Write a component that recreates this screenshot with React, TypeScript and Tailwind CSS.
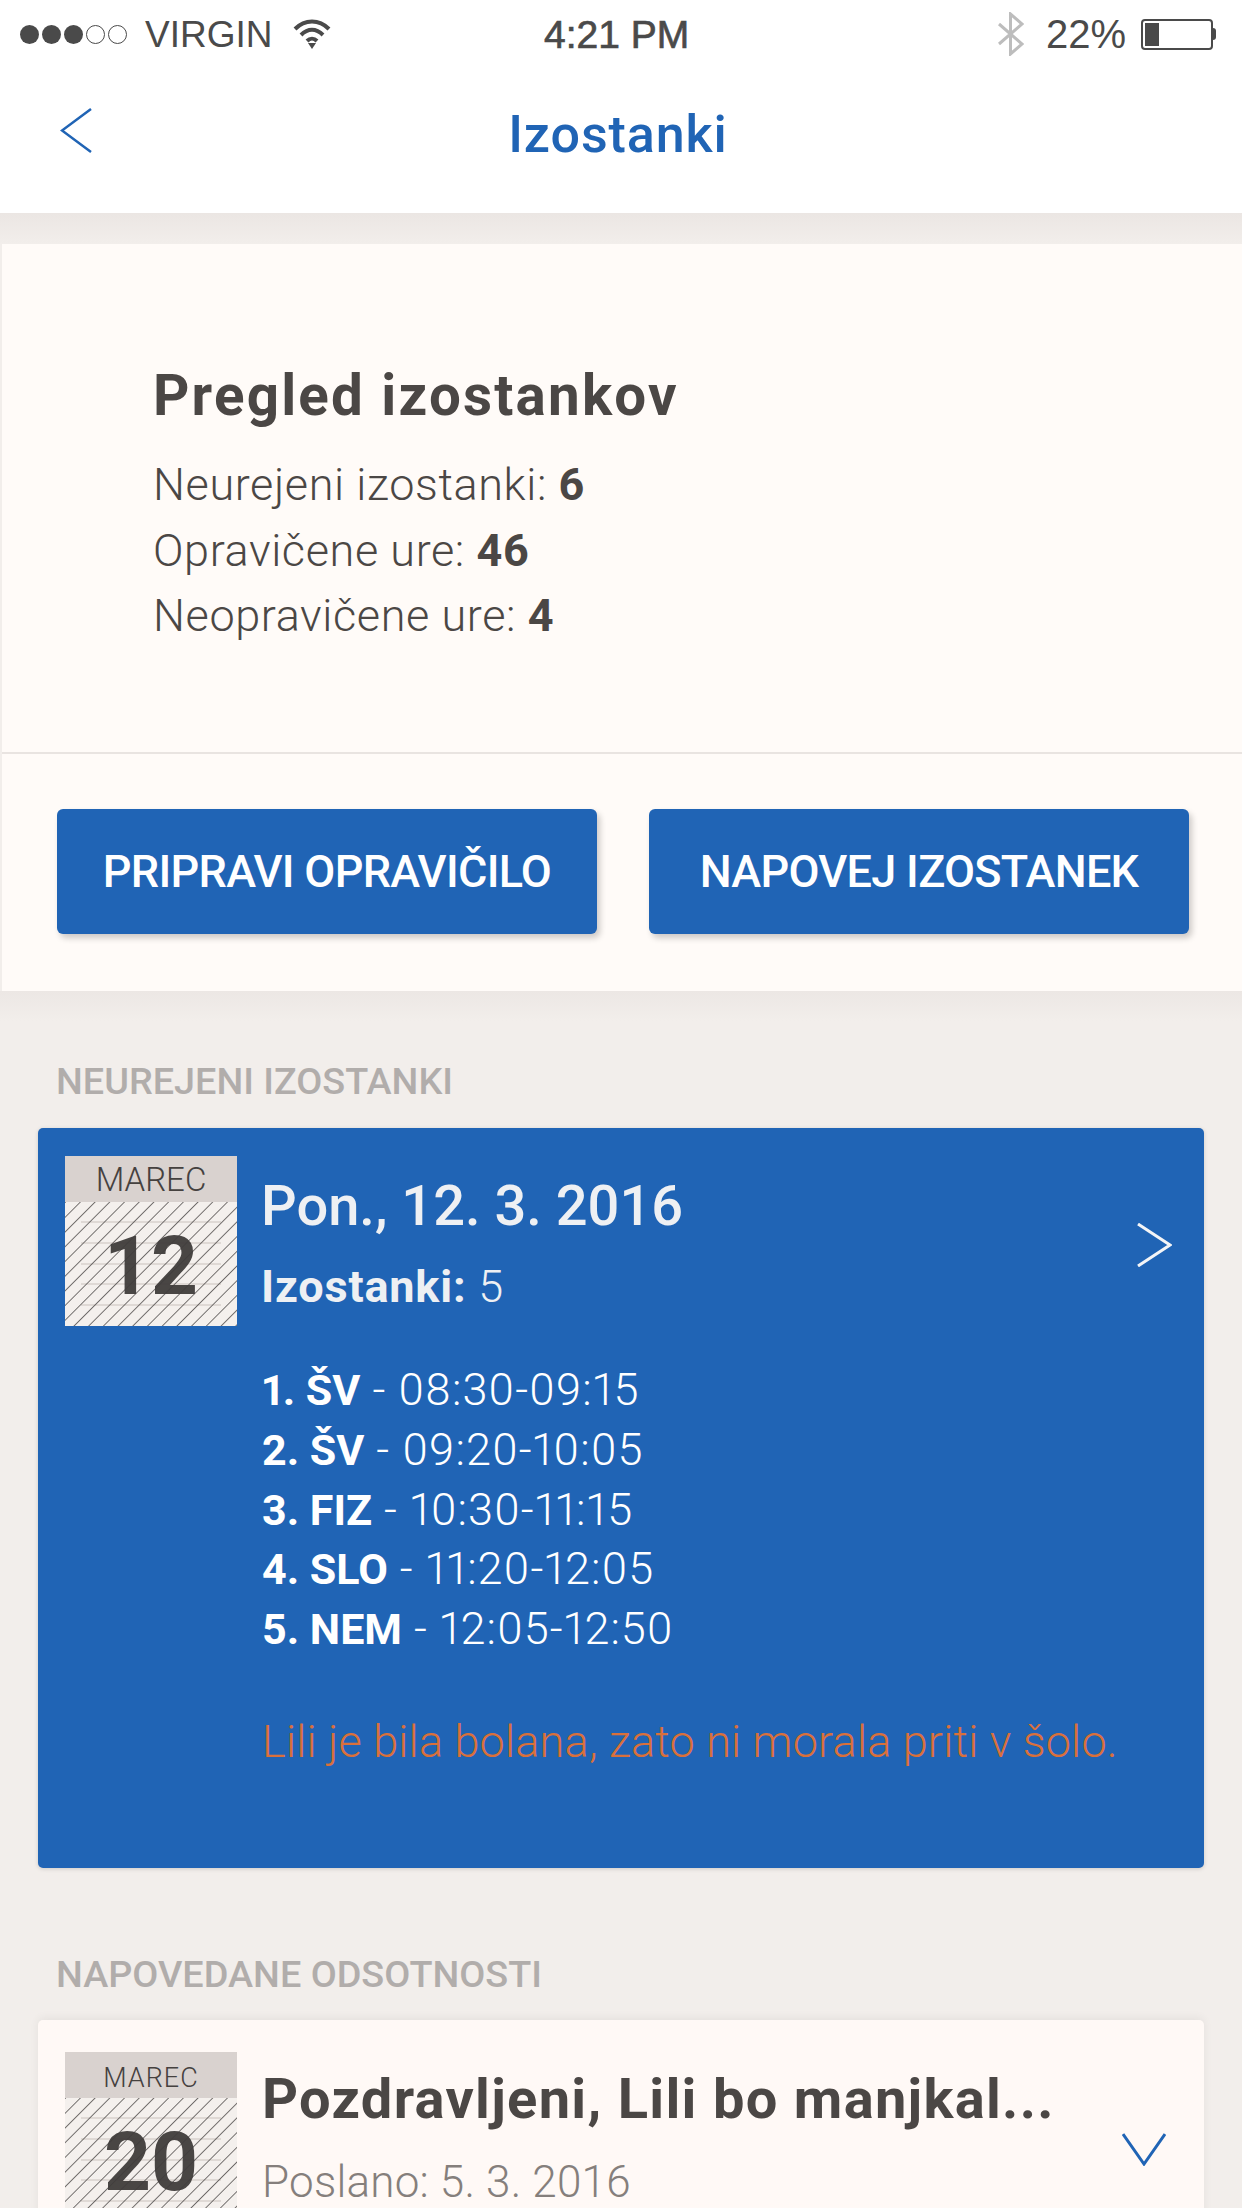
const font = { fontFamily: 'Roboto, sans-serif' };

const StatusBar = () => (
	<div className="flex h-[68px] items-center bg-white pl-[20px] pr-[21px] font-['Liberation_Sans',sans-serif] text-[37px] text-[#4a4a4a]">
		<div className="flex w-[125px] items-center gap-[3px]">
			{[0, 1, 2].map((i) => (
				<span key={i} className="h-[19px] w-[19px] rounded-full bg-[#4a4a4a]" />
			))}
			{[0, 1].map((i) => (
				<span key={i} className="h-[19px] w-[19px] rounded-full border border-[#4a4a4a]" />
			))}
		</div>
		<span className="w-[148px] leading-none">VIRGIN</span>
		<svg width="38" height="30" viewBox="0 0 38 30" fill="none" stroke="#4a4a4a" strokeWidth="4">
			<path d="M2 10C12 0 26 0 36 10" />
			<path d="M8 16C15 9 23 9 30 16" />
			<path d="M14 22C17 19 21 19 24 22" />
			<path d="M19 30l-4-6h8z" fill="#4a4a4a" stroke="none" />
		</svg>
		<span className="ml-[213px] w-[453px] text-[39px] font-medium leading-none [-webkit-text-stroke:0.7px_#4a4a4a]">4:21 PM</span>
		<svg width="27" height="44" viewBox="0 0 27 44" fill="none" stroke="#bdbdbd" strokeWidth="3">
			<path d="M2 12L25 32L13.500 42V2L25 12L2 32" />
		</svg>
		<span className="ml-[22px] text-[40px] leading-none">22%</span>
		<div className="ml-[15px] flex h-[31px] w-[72px] rounded-[4px] border-2 border-[#4a4a4a] p-[2px]">
			<div className="h-full w-[14px] bg-[#4a4a4a]" />
		</div>
		<div className="h-[12px] w-[3px] rounded-r-full bg-[#4a4a4a]" />
	</div>
);

const NavBar = () => (
	<div className="relative flex h-[145px] items-center justify-center bg-white pb-[12px] pr-[6px]">
		<svg className="absolute left-[60px] top-[40px]" width="32" height="45" viewBox="0 0 32 45" fill="none" stroke="#2064b5" strokeWidth="2.500">
			<path d="M31 1L2 22.500L31 44" />
		</svg>
		<span className="text-[52px] font-medium leading-none tracking-[0.9px] text-[#2064b5]">Izostanki</span>
	</div>
);

const Stat = ({ label, value }: { label: string; value: number }) => (
	<div className="h-[65.500px] text-[45px] font-light leading-[65.500px] tracking-[0.6px] text-[#4b4745]">
		{label} <span className="font-bold">{value}</span>
	</div>
);

const ActionButton = ({ label }: { label: string }) => (
	<button
		type="button"
		className="flex h-[125px] w-[540px] items-center justify-center rounded-[6px] bg-[#2064b5] text-[45px] font-medium tracking-[-0.7px] text-white shadow-[3px_4px_6px_rgba(0,0,0,0.2)]"
	>
		{label}
	</button>
);

const SectionLabel = ({ label }: { label: string }) => (
	<div className="pl-[56px] text-[37.800px] font-medium leading-[40px] text-[#b1adab]">{label}</div>
);

const CalendarTile = ({ day, id, small }: { day: number; id: string; small?: boolean }) => (
	<div className="w-[172px] shrink-0">
		<div
			className={`flex h-[46px] items-center justify-center bg-[#d9d2cf] font-light leading-none text-[#45413f] ${
				small ? 'pt-[6px] text-[27px] tracking-[1px]' : 'text-[33px]'
			}`}
		>
			MAREC
		</div>
		<div className="relative h-[124px] bg-[#f4f0ed]">
			<svg className="absolute inset-0" width="172" height="124">
				<defs>
					<pattern id={id} width="10.400" height="10.400" patternUnits="userSpaceOnUse" patternTransform="rotate(45)">
						<line x1="0" y1="0" x2="0" y2="10.400" stroke="#555150" strokeWidth="1.600" />
					</pattern>
				</defs>
				{[20, 41, 62, 82, 103].map((y) => (
					<line key={y} x1="16" x2="156" y1={y} y2={y} stroke="#d6cfcb" strokeOpacity="0.7" strokeWidth="2" />
				))}
				<rect width="172" height="124" fill={`url(#${id})`} />
			</svg>
			<div className="relative flex h-full items-center justify-center pt-[4px] text-[82px] font-bold leading-none text-[#3f3c3b]/95">
				{day}
			</div>
		</div>
	</div>
);

const lessons = [
	['1. ŠV', '08:30-09:15'],
	['2. ŠV', '09:20-10:05'],
	['3. FIZ', '10:30-11:15'],
	['4. SLO', '11:20-12:05'],
	['5. NEM', '12:05-12:50'],
];

export default function App() {
	return (
		<div className="h-[2208px] overflow-hidden bg-[#f2eeeb]" style={font}>
			<StatusBar />
			<NavBar />
			<div className="h-[31px] bg-gradient-to-b from-[#ebe6e3] to-[#f2eeeb]" />

			<div className="ml-[2px] bg-[#fffbf8]">
				<div className="h-[510px] border-b-2 border-[#e9e4e1] pl-[151px] pt-[126px]">
					<h1 className="mb-[30px] text-[56.500px] font-bold leading-[52px] tracking-[2.2px] text-[#4b4745]">Pregled izostankov</h1>
					<Stat label="Neurejeni izostanki:" value={6} />
					<Stat label="Opravičene ure:" value={46} />
					<Stat label="Neopravičene ure:" value={4} />
				</div>
				<div className="flex h-[237px] justify-between pl-[55px] pr-[53px] pt-[55px]">
					<ActionButton label="PRIPRAVI OPRAVIČILO" />
					<ActionButton label="NAPOVEJ IZOSTANEK" />
				</div>
			</div>

			<div className="h-[30px] bg-gradient-to-b from-[#ece7e4] to-[#f2eeeb]" />
			<div className="pt-[40px]">
				<SectionLabel label="NEUREJENI IZOSTANKI" />
			</div>

			<div className="mx-[38px] mt-[27px] h-[740px] rounded-[5px] bg-[#2064b5] pl-[27px] pr-[32px] pt-[28px] text-[#eef0f3] shadow-[0_1px_4px_rgba(0,0,0,0.15)]">
				<div className="flex">
					<CalendarTile day={12} id="hatch-march-12" />
					<div className="ml-[24px] flex-1">
						<div className="mt-[22px] text-[56px] font-medium leading-[56px]">Pon., 12. 3. 2016</div>
						<div className="mt-[28px] text-[45px] font-light leading-[50px] tracking-[0.8px]">
							<span className="font-bold">Izostanki:</span> 5
						</div>
					</div>
					<svg className="mt-[67px]" width="36" height="44" viewBox="0 0 36 44" fill="none" stroke="#f4f5f7" strokeWidth="3">
						<path d="M2 1L34 22L2 43" />
					</svg>
				</div>
				<div className="ml-[197px] mt-[34px]">
					{lessons.map(([subject, time]) => (
						<div key={subject} className="h-[59.800px] text-[45px] font-light leading-[59.800px] tracking-[1px] text-white proportional-nums">
							<span className="text-[43px] font-bold tracking-normal">{subject}</span> - {time}
						</div>
					))}
					<div className="mt-[53px] text-[45px] font-light leading-[60px] tracking-[0.2px] text-[#d9703b]">
						Lili je bila bolana, zato ni morala priti v šolo.
					</div>
				</div>
			</div>

			<div className="pt-[86px]">
				<SectionLabel label="NAPOVEDANE ODSOTNOSTI" />
			</div>

			<div className="mx-[38px] mt-[26px] h-[300px] rounded-[5px] bg-[#fff9f6] pl-[27px] pr-[38px] pt-[32px] shadow-[0_-2px_10px_rgba(0,0,0,0.06)]">
				<div className="flex">
					<CalendarTile day={20} id="hatch-march-20" small />
					<div className="ml-[25px] flex-1">
						<div className="mt-[19px] whitespace-nowrap text-[56px] font-bold leading-[56px] tracking-[1.3px] text-[#4b4745]">
							Pozdravljeni, Lili bo manjkal...
						</div>
						<div className="mt-[30px] text-[44px] font-light leading-[50px] tracking-[0.2px] text-[#857f7c]">Poslano: 5. 3. 2016</div>
					</div>
					<svg className="mt-[80px] shrink-0" width="44" height="34" viewBox="0 0 44 34" fill="none" stroke="#2064b5" strokeWidth="3">
						<path d="M1 2L22 32L43 2" />
					</svg>
				</div>
			</div>
		</div>
	);
}
